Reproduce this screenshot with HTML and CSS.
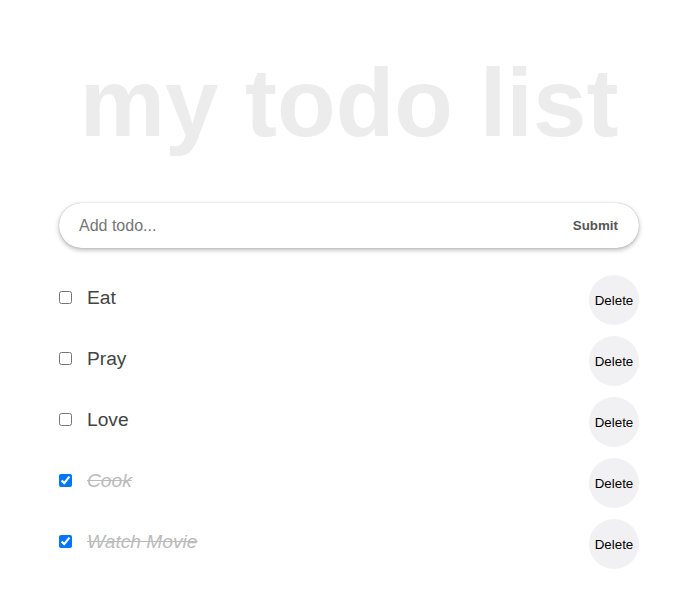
FILE: index.html
```html
<!DOCTYPE html>
<html lang="en">
<head>
<meta charset="utf-8">
<title>my todo list</title>
<link rel="stylesheet" href="styles.css">
</head>
<body>
<div class="app">
  <h1 class="title">my todo list</h1>
  <form class="add-form">
    <input class="add-input" type="text" placeholder="Add todo...">
    <button class="add-btn" type="button">Submit</button>
  </form>
  <ul class="todos">
    <li class="todo">
      <label class="todo-main"><input class="todo-check" type="checkbox"><span class="todo-text">Eat</span></label>
      <button class="del-btn" type="button">Delete</button>
    </li>
    <li class="todo">
      <label class="todo-main"><input class="todo-check" type="checkbox"><span class="todo-text">Pray</span></label>
      <button class="del-btn" type="button">Delete</button>
    </li>
    <li class="todo">
      <label class="todo-main"><input class="todo-check" type="checkbox"><span class="todo-text">Love</span></label>
      <button class="del-btn" type="button">Delete</button>
    </li>
    <li class="todo done">
      <label class="todo-main"><input class="todo-check" type="checkbox" checked><span class="todo-text">Cook</span></label>
      <button class="del-btn" type="button">Delete</button>
    </li>
    <li class="todo done">
      <label class="todo-main"><input class="todo-check" type="checkbox" checked><span class="todo-text">Watch Movie</span></label>
      <button class="del-btn" type="button">Delete</button>
    </li>
  </ul>
</div>
</body>
</html>
```

FILE: styles.css
```css
html, body {
  margin: 0;
  padding: 0;
  background: #fff;
  font-family: "Liberation Sans", Arial, sans-serif;
}

.app {
  width: 580px;
  margin-left: 59px;
  padding-top: 49px;
}

.title {
  margin: 0;
  font-size: 96px;
  line-height: 108px;
  font-weight: bold;
  color: #ececec;
  text-align: center;
}

.add-form {
  margin: 46px 0 0;
  height: 45px;
  display: flex;
  align-items: center;
  border-radius: 23px;
  background: #fff;
  box-shadow: 0 2px 5px rgba(0, 0, 0, 0.28), 0 0 1px rgba(0, 0, 0, 0.35);
}

.add-input {
  flex: 1;
  border: none;
  outline: none;
  background: transparent;
  font-family: "Liberation Sans", Arial, sans-serif;
  font-size: 16px;
  color: #333;
  padding: 0 0 0 20px;
  height: 100%;
}

.add-input::placeholder {
  color: #757575;
}

.add-btn {
  border: none;
  background: transparent;
  font-family: "Liberation Sans", Arial, sans-serif;
  font-size: 13.33px;
  font-weight: bold;
  color: #555;
  padding: 0 21px 0 10px;
  height: 100%;
}

.todos {
  list-style: none;
  margin: 21.5px 0 0;
  padding: 0;
}

.todo {
  height: 61px;
  display: flex;
  align-items: center;
  justify-content: space-between;
}

.todo-main {
  display: flex;
  align-items: center;
  padding-bottom: 5px;
}

.todo-check {
  margin: 0;
  width: 13px;
  height: 13px;
}

.todo-text {
  margin-left: 15px;
  font-size: 19.2px;
  line-height: 22px;
  color: #444;
}

.done .todo-text {
  font-style: italic;
  text-decoration: line-through;
  color: #bbb;
}

.del-btn {
  width: 50px;
  height: 50px;
  border-radius: 50%;
  border: none;
  background: #f1f1f3;
  color: #000;
  font-family: "Liberation Sans", Arial, sans-serif;
  font-size: 13.33px;
  padding: 0;
}
```
